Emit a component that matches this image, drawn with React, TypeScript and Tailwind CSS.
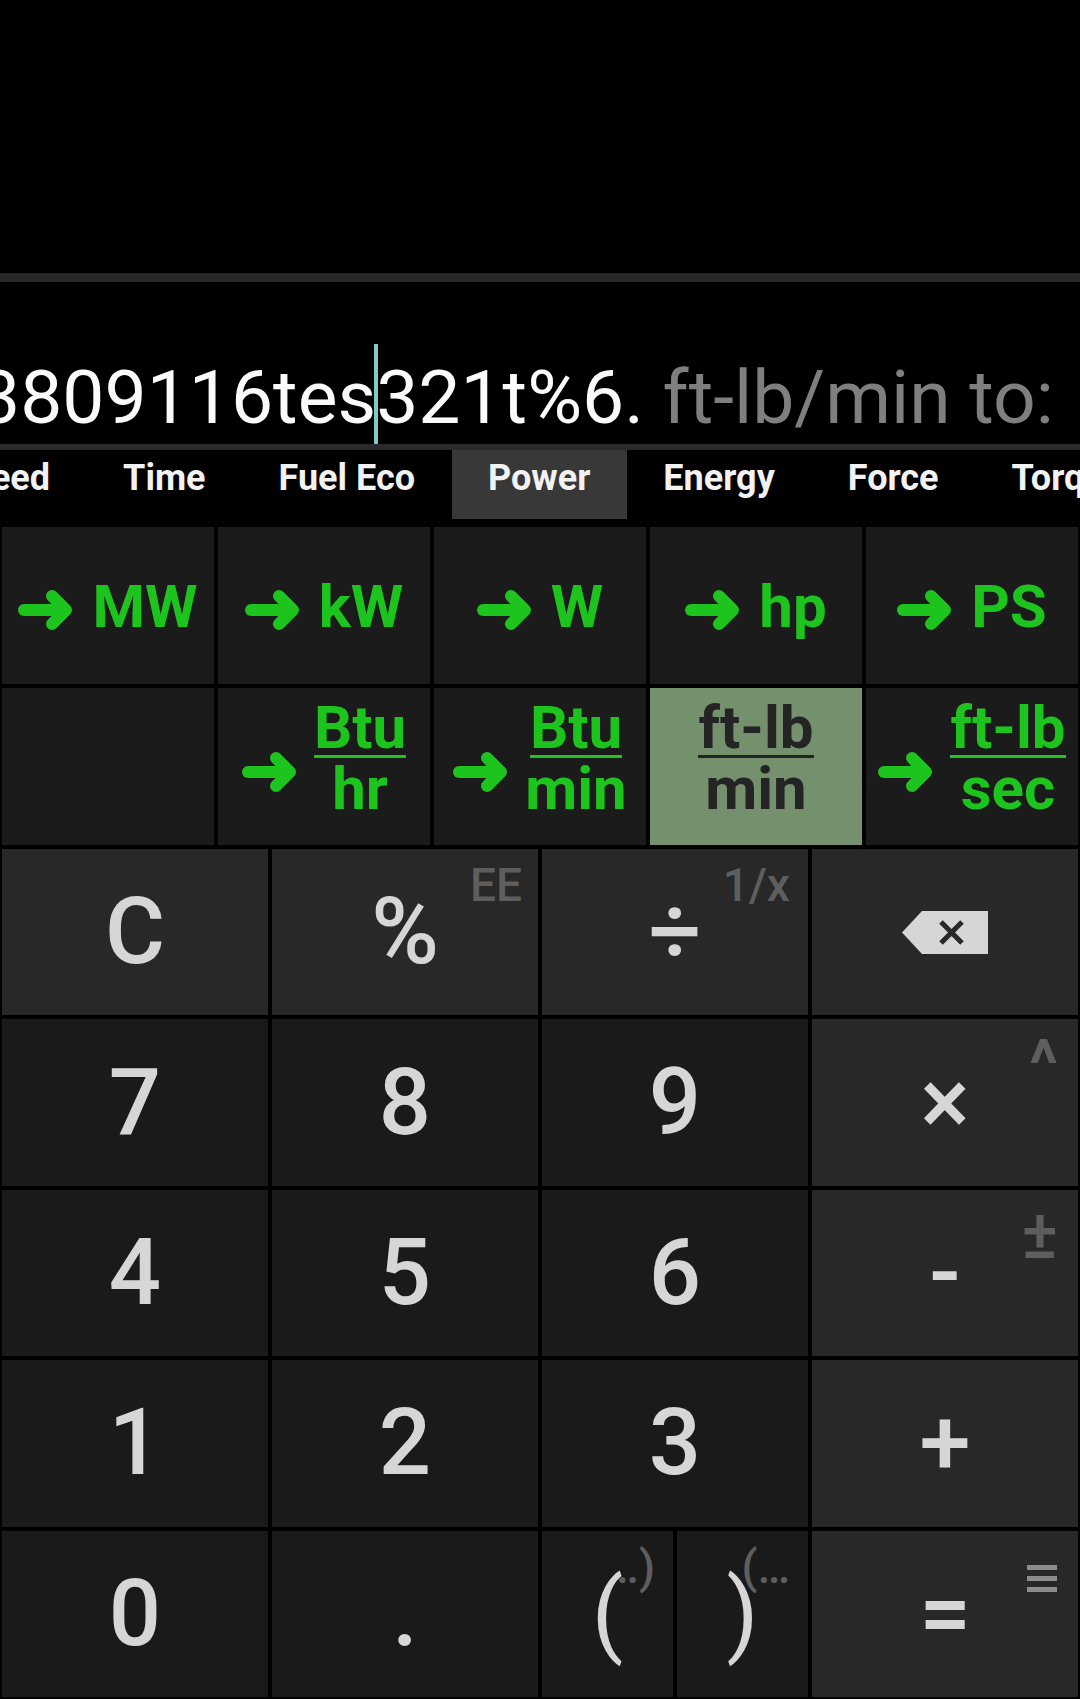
import React from "react";

const GREEN = "text-[#1ec41e]";

const Arrow = ({ className = "" }: { className?: string }) => (
  <svg viewBox="0 0 54 42" className={`w-[54px] h-[42px] shrink-0 ${className}`}>
    <path d="M6 21H46" stroke="currentColor" strokeWidth="12" strokeLinecap="round" fill="none" />
    <path d="M34 7L48 21L34 35" stroke="currentColor" strokeWidth="12" strokeLinecap="round" strokeLinejoin="round" fill="none" />
  </svg>
);

const Unit = ({ label }: { label: string }) => (
  <div className={`flex items-center justify-center gap-[20px] bg-[#1b1b1b] pt-[3px] ${GREEN}`}>
    <Arrow className="mt-[6px]" />
    <span className="text-[60px] leading-none font-bold">{label}</span>
  </div>
);

const Frac = ({ top, bottom, dark = false }: { top: string; bottom: string; dark?: boolean }) => (
  <div className="flex flex-col items-center pb-[12px] text-[60px] font-bold">
    <span className={`leading-[54px] border-b-[3px] ${dark ? "border-[#242424]" : "border-[#1ec41e]"}`}>{top}</span>
    <span className="leading-[62px]">{bottom}</span>
  </div>
);

const FracUnit = ({ top, bottom }: { top: string; bottom: string }) => (
  <div className={`flex items-center justify-center gap-[18px] bg-[#1b1b1b] ${GREEN}`}>
    <Arrow className="mt-[10px]" />
    <Frac top={top} bottom={bottom} />
  </div>
);

type KeyProps = {
  label?: string;
  op?: boolean;
  sub?: string;
  subClass?: string;
  thin?: boolean;
  children?: React.ReactNode;
};

const Key = ({ label, op, sub, subClass = "right-[18px] top-[13px] text-[46px]", thin, children }: KeyProps) => (
  <div className={`relative flex items-center justify-center ${op ? "bg-[#282828]" : "bg-[#1a1a1a]"}`}>
    {sub && (
      <span className={`absolute leading-none font-medium text-[#5e5e5e] ${subClass}`}>
        {sub}
      </span>
    )}
    {label && (
      <span className={`relative text-[92px] leading-none text-[#d6d6d6] ${thin ? "font-normal" : "font-medium"}`}>
        {label}
      </span>
    )}
    {children}
  </div>
);

const tabs = ["Speed", "Time", "Fuel Eco", "Power", "Energy", "Force", "Torque"];

export default function App() {
  return (
    <div className="w-[1080px] h-[1699px] bg-black flex flex-col overflow-hidden font-[family-name:Roboto,sans-serif]">
      {/* top empty area */}
      <div className="h-[273px] shrink-0" />
      <div className="h-[9px] shrink-0 bg-[#282828]" />

      {/* display */}
      <div className="h-[162px] shrink-0 flex items-end justify-end overflow-hidden pr-[26px] pb-[9px]">
        <span className="shrink-0 whitespace-nowrap text-[75px] leading-none font-normal text-[#fafafa]">
          3809116tes
          <span className="relative">
            <span className="absolute left-[-2px] top-[-9px] w-[4px] h-[102px] bg-[#80cbc4]" />
          </span>
          321t%6. <span className="text-[#7f7f7f]">ft-lb/min to:</span>
        </span>
      </div>
      <div className="h-[6px] shrink-0 bg-[#2a2a2a]" />

      {/* category tabs */}
      <div className="h-[69px] shrink-0 flex overflow-hidden">
        <div className="flex shrink-0 ml-[-88px]">
          {tabs.map((t) => (
            <div
              key={t}
              className={`px-[36.5px] pt-[10px] text-[36px] font-bold leading-none text-[#f2f2f2] whitespace-nowrap ${
                t === "Power" ? "bg-[#383838]" : ""
              }`}
            >
              {t}
            </div>
          ))}
        </div>
      </div>
      <div className="h-[8px] shrink-0" />

      {/* unit converter grid */}
      <div className="grid grid-cols-5 grid-rows-[157px_157px] gap-[4px] px-[2px] shrink-0">
        <Unit label="MW" />
        <Unit label="kW" />
        <Unit label="W" />
        <Unit label="hp" />
        <Unit label="PS" />
        <div className="bg-[#1b1b1b]" />
        <FracUnit top="Btu" bottom="hr" />
        <FracUnit top="Btu" bottom="min" />
        <div className="flex items-center justify-center bg-[#74906c] text-[#242424]">
          <Frac top="ft-lb" bottom="min" dark />
        </div>
        <FracUnit top="ft-lb" bottom="sec" />
      </div>
      <div className="h-[4px] shrink-0" />

      {/* keypad */}
      <div className="flex-1 grid grid-cols-4 grid-rows-5 gap-[4px] px-[2px] pb-[2px]">
        <Key label="C" op />
        <Key label="%" op sub="EE" subClass="right-[16px] top-[13px] text-[46px]" />
        <Key label="÷" op sub="1/x" />
        <Key op>
          <svg viewBox="0 0 86 43" className="w-[86px] h-[43px]">
            <polygon points="0,21.5 20,0 86,0 86,43 20,43" fill="#d6d6d6" />
            <path d="M39 11L60 32M60 11L39 32" stroke="#282828" strokeWidth="5" />
          </svg>
        </Key>

        <Key label="7" />
        <Key label="8" />
        <Key label="9" />
        <Key label="×" op sub="^" subClass="right-[20px] top-[13px] text-[66px] !font-bold" />

        <Key label="4" />
        <Key label="5" />
        <Key label="6" />
        <Key label="-" op sub="±" subClass="right-[20px] top-[11px] text-[68px]" />

        <Key label="1" />
        <Key label="2" />
        <Key label="3" />
        <Key label="+" op />

        <Key label="0" />
        <Key label="." />
        <div className="grid grid-cols-2 gap-[4px]">
          <Key label="(" sub="‥)" thin />
          <Key label=")" sub="(…" thin />
        </div>
        <Key label="=" op>
          <div className="absolute right-[21px] top-[34px] flex flex-col gap-[6px]">
            <div className="w-[30px] h-[5px] bg-[#8c8c8c]" />
            <div className="w-[30px] h-[5px] bg-[#8c8c8c]" />
            <div className="w-[30px] h-[5px] bg-[#8c8c8c]" />
          </div>
        </Key>
      </div>
    </div>
  );
}
